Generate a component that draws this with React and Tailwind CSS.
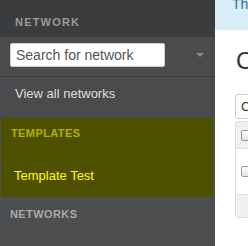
import React from 'react'

const Checkbox = () => (
  <div className="w-[11px] h-[11px] rounded-[2px] border border-[#9a9a9a] bg-gradient-to-b from-white to-[#e2e2e2]" />
)

const Sidebar = () => (
  <div className="w-[215px] shrink-0 flex flex-col bg-[#4d4e50]">
    {/* Section title */}
    <div className="h-[37px] bg-[#3b3c3e] px-[15px] pt-[17px]">
      <div className="text-[11px] leading-none font-bold tracking-[1.2px] text-[#9b9b9b]">NETWORK</div>
    </div>

    {/* Search */}
    <div className="h-[40px] bg-[#4a4b4d] border-b border-[#3c3d3f] flex items-start pt-[6px] pl-[10px]">
      <input
        type="text"
        placeholder="Search for network"
        className="w-[155px] h-[24px] bg-white border border-[#cfcfcf] rounded-[2px] px-[5px] text-[14px] text-[#333] placeholder:text-[#555] outline-none"
      />
      <div className="ml-[31px] mt-[10px] w-0 h-0 border-l-[4px] border-r-[4px] border-t-[4px] border-l-transparent border-r-transparent border-t-[#8a8a8a]" />
    </div>

    <div className="h-[41px] bg-[#4a4b4d] px-[15px] pt-[9px]">
      <div className="text-[13px] leading-[16px] text-[#dedede]">View all networks</div>
    </div>

    {/* Templates */}
    <div className="h-[79px] ml-px mr-[2px] bg-[#4f4f00] pt-[10px]">
      <div className="pl-[10px] text-[11px] leading-none font-bold tracking-[0.4px] text-[#b1b100]">TEMPLATES</div>
      <div className="mt-[29px] pl-[13px] text-[13px] leading-[16px] text-[#ffff00]">Template Test</div>
    </div>

    {/* Networks */}
    <div className="flex-1 px-[10px] pt-[12px]">
      <div className="text-[11px] leading-none font-bold tracking-[0.4px] text-[#a9a9a9]">NETWORKS</div>
    </div>
  </div>
)

const App = () => {
  return (
    <div className="flex h-[246px] w-[248px] overflow-hidden font-['Liberation_Sans',Arial,sans-serif]">
      <Sidebar />

      <div className="flex-1 min-w-0 overflow-hidden bg-white">
        <div className="h-[30px] bg-[#d9edf7] pl-[17px] overflow-hidden">
          <div className="-mt-[6px] text-[14px] leading-[20px] text-[#31708f] whitespace-nowrap">There are no networks in this template</div>
        </div>

        <h1 className="mt-[18px] pl-[21px] text-[24px] leading-[26px] font-normal text-[#333] whitespace-nowrap">Configuration templates</h1>

        <div className="pl-[20px] mt-[20px] w-[400px]">
          <button className="h-[25px] px-[5px] border border-[#cccccc] rounded-[3px] bg-white text-[13px] text-[#333] whitespace-nowrap">
            Create a new template
          </button>

          <div className="mt-[2px] border border-[#dddddd] rounded-[3px] overflow-hidden">
            <div className="h-[27px] bg-[#f0f0f0] border-b border-[#dddddd] flex items-center pl-[5px]">
              <Checkbox />
            </div>
            <div className="h-[46px] bg-white border-b border-[#dddddd] flex items-center pl-[5px]">
              <Checkbox />
            </div>
            <div className="h-[22px] bg-[#f0f0f0]" />
          </div>
        </div>
      </div>
    </div>
  )
}

export default App
